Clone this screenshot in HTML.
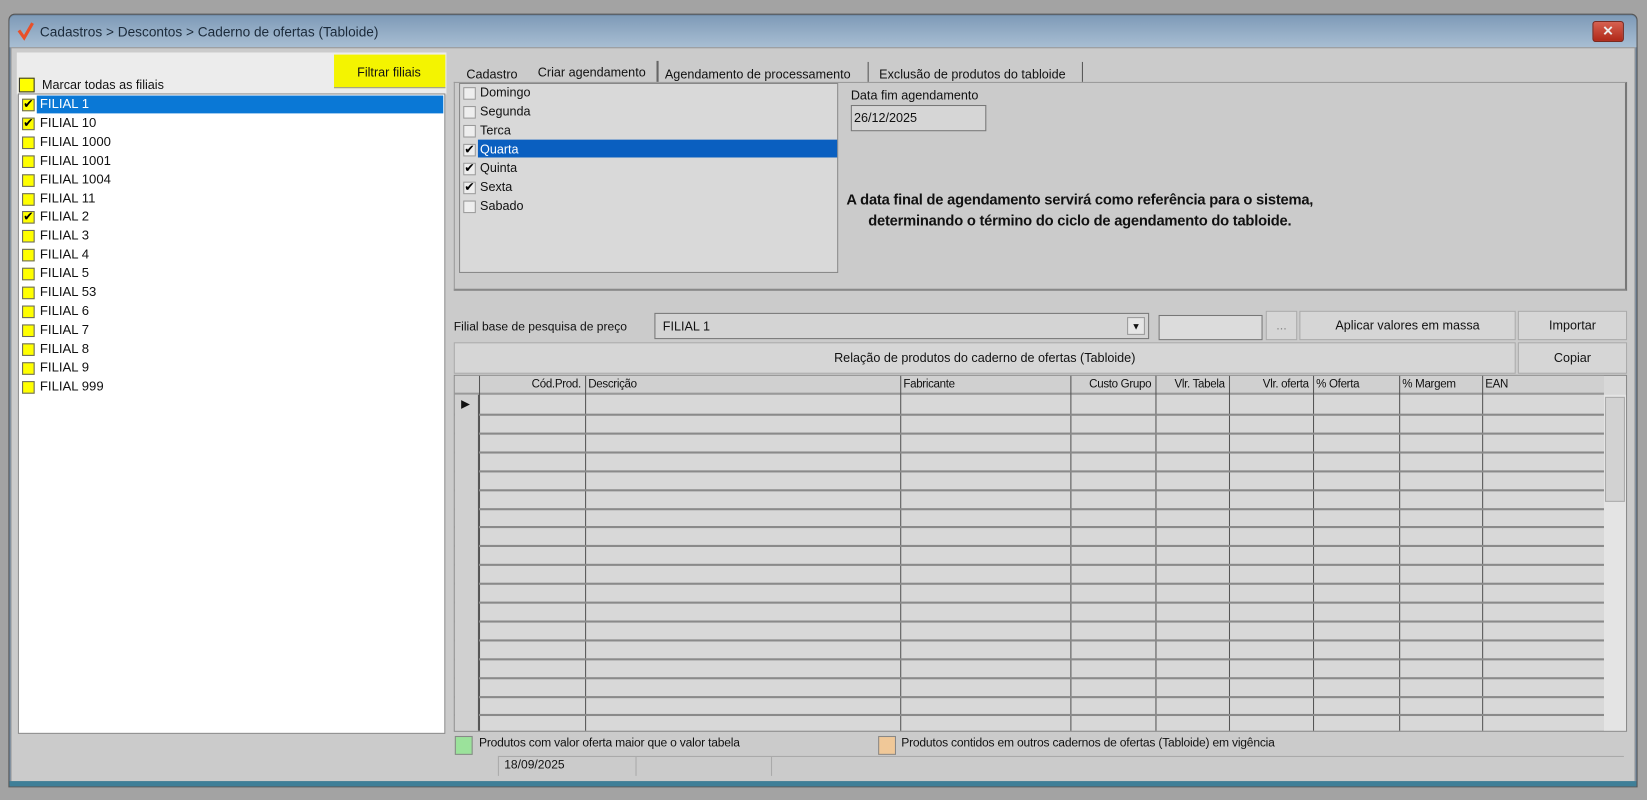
<!DOCTYPE html>
<html><head><meta charset="utf-8">
<style>
html,body{margin:0;padding:0;width:1647px;height:800px;overflow:hidden;background:#a3a3a3}
#s{position:absolute;left:0;top:0;width:1568px;height:762px;transform:scale(1.0504,1.0499);transform-origin:0 0;font-family:"Liberation Sans",sans-serif;font-size:12px;color:#111}
.a{position:absolute;box-sizing:border-box}
.t{position:absolute;white-space:nowrap}
.cb{position:absolute;width:12px;height:12px;box-sizing:border-box;border:1px solid #666;background:#ffff00}
.cw{position:absolute;width:12px;height:12px;box-sizing:border-box;border:1px solid #999;background:#eee}
.ck::after{content:"✔";position:absolute;left:0;top:-3px;font-size:12px;color:#000}
.btn{background:#d6d6d6;border:1px solid #aaa;text-align:center}
</style></head><body><div id="s">
<div class="a" style="left:8px;top:13px;width:1551px;height:737px;background:#6f8aa6;border-radius:6px 6px 0 0;border:1px solid #555"></div>
<div class="a" style="left:9px;top:15px;width:1549px;height:30px;background:linear-gradient(#7f9bb8,#a8bed3);border-radius:5px 5px 0 0"></div>
<svg class="a" style="left:16px;top:20px" width="20" height="20"><path d="M2 9 L7 16 L15 2" stroke="#e8502a" stroke-width="3" fill="none"/></svg>
<div class="t" style="left:38px;top:23px;font-size:13px;color:#1b2a3a">Cadastros &gt; Descontos &gt; Caderno de ofertas (Tabloide)</div>
<div class="a" style="left:1516px;top:20px;width:30px;height:20px;background:linear-gradient(#d66050,#b02818);border:1px solid #7a2a20;border-radius:3px;color:#eee;text-align:center;font-size:13px;line-height:18px;font-weight:bold">✕</div>
<div class="a" style="left:10px;top:45px;width:1547px;height:700px;background:#cbcbcb;border:1px solid #999"></div>
<div class="a" style="left:9px;top:744px;width:1549px;height:5px;background:#3f7f98"></div>
<div class="a" style="left:16px;top:50px;width:409px;height:40px;background:#ececec"></div>
<div class="a" style="left:318px;top:52px;width:106px;height:32px;background:#f4f400;border-bottom:1px solid #999"></div>
<div class="t" style="left:340px;top:62px">Filtrar filiais</div>
<div class="cb" style="left:18px;top:74px;width:15px;height:14px;border-color:#333"></div>
<div class="t" style="left:40px;top:74px">Marcar todas as filiais</div>
<div class="a" style="left:17px;top:89px;width:407px;height:610px;background:#fff;border:1px solid #888"></div>
<div class="a" style="left:35px;top:91px;width:387px;height:17px;background:#0a78d6"></div>
<div id="fl"></div>
<div class="t" style="left:444px;top:64px">Cadastro</div>
<div class="t" style="left:512px;top:62px">Criar agendamento</div>
<div class="a" style="left:625px;top:58px;width:2px;height:20px;background:#666"></div>
<div class="t" style="left:633px;top:64px">Agendamento de processamento</div>
<div class="a" style="left:826px;top:59px;width:1px;height:19px;background:#555"></div>
<div class="t" style="left:837px;top:64px">Exclusão de produtos do tabloide</div>
<div class="a" style="left:1030px;top:59px;width:1px;height:19px;background:#555"></div>
<div class="a" style="left:432px;top:78px;width:1117px;height:199px;border:1px solid #999;border-right:2px solid #777;border-bottom:2px solid #888"></div>
<div class="a" style="left:437px;top:79px;width:361px;height:181px;background:#d9d9d9;border:1px solid #888"></div>
<div class="a" style="left:455px;top:133px;width:342px;height:17px;background:#0a5fc0"></div>
<div id="dl"></div>
<div class="t" style="left:810px;top:84px">Data fim agendamento</div>
<div class="a" style="left:810px;top:100px;width:129px;height:25px;border:1px solid #777;background:#d6d6d6"></div>
<div class="t" style="left:813px;top:105px">26/12/2025</div>
<div class="t" style="left:778px;top:180px;width:500px;text-align:center;font-size:14px;font-weight:bold;line-height:20px;letter-spacing:-0.2px">A data final de agendamento servirá como referência para o sistema,<br>determinando o término do ciclo de agendamento do tabloide.</div>
<div class="t" style="left:432px;top:306px;font-size:11.5px">Filial base de pesquisa de preço</div>
<div class="a" style="left:623px;top:298px;width:471px;height:25px;border:1px solid #777;background:#d4d4d4"></div>
<div class="t" style="left:631px;top:304px">FILIAL 1</div>
<div class="a" style="left:1073px;top:302px;width:17px;height:17px;background:#e6e6e6;border:1px solid #999;font-size:9px;text-align:center;line-height:16px">▼</div>
<div class="a" style="left:1103px;top:300px;width:99px;height:24px;border:1px solid #777;background:#dcdcdc"></div>
<div class="a btn" style="left:1205px;top:296px;width:30px;height:28px;color:#888;line-height:26px">...</div>
<div class="a btn" style="left:1237px;top:296px;width:206px;height:28px;line-height:26px">Aplicar valores em massa</div>
<div class="a btn" style="left:1445px;top:296px;width:104px;height:28px;line-height:26px">Importar</div>
<div class="a btn" style="left:432px;top:326px;width:1011px;height:30px;line-height:28px">Relação de produtos do caderno de ofertas (Tabloide)</div>
<div class="a btn" style="left:1445px;top:326px;width:104px;height:30px;line-height:28px">Copiar</div>
<div class="a" style="left:432px;top:357px;width:1117px;height:340px;background:#d8d8d8;border:1px solid #888"></div>
<div class="a" style="left:433px;top:358px;width:1094px;height:18px;background:#d0d0d0;border-bottom:2px solid #999"></div>
<div class="a" style="left:1527px;top:376px;width:21px;height:320px;background:#e4e4e4"></div>
<div class="a" style="left:1528px;top:378px;width:19px;height:100px;background:#d2d2d2;border:1px solid #aaa"></div>
<div id="gr"></div>
<div class="t" style="left:439px;top:378px;font-size:11px;z-index:5">▶</div>
<div class="a" style="left:433px;top:701px;width:17px;height:18px;background:#9be29b;border:1px solid #888"></div>
<div class="t" style="left:456px;top:702px;font-size:11.5px;letter-spacing:-0.2px">Produtos com valor oferta maior que o valor tabela</div>
<div class="a" style="left:836px;top:701px;width:17px;height:18px;background:#f0c898;border:1px solid #888"></div>
<div class="t" style="left:858px;top:702px;font-size:11.5px;letter-spacing:-0.2px">Produtos contidos em outros cadernos de ofertas (Tabloide) em vigência</div>
<div class="a" style="left:474px;top:720px;width:1072px;height:1px;background:#aaa"></div>
<div class="a" style="left:474px;top:721px;width:1px;height:18px;background:#aaa"></div>
<div class="a" style="left:605px;top:721px;width:1px;height:18px;background:#aaa"></div>
<div class="a" style="left:734px;top:721px;width:1px;height:18px;background:#aaa"></div>
<div class="t" style="left:480px;top:723px;font-size:11.5px">18/09/2025</div>
</div>
<script>
var f=["FILIAL 1","FILIAL 10","FILIAL 1000","FILIAL 1001","FILIAL 1004","FILIAL 11","FILIAL 2","FILIAL 3","FILIAL 4","FILIAL 5","FILIAL 53","FILIAL 6","FILIAL 7","FILIAL 8","FILIAL 9","FILIAL 999"],ck=[0,1,6],h="";
f.forEach(function(n,i){var y=92+i*17.9;h+='<div class="cb'+(ck.indexOf(i)>=0?' ck':'')+'" style="left:21px;top:'+(y+2)+'px"></div><div class="t" style="left:38px;top:'+y+'px;font-size:12.5px;color:'+(i==0?'#fff':'#111')+'">'+n+'</div>'});
document.getElementById('fl').outerHTML=h;
var d=["Domingo","Segunda","Terca","Quarta","Quinta","Sexta","Sabado"];h="";
d.forEach(function(n,i){var y=80+i*18;h+='<div class="cw'+(i>=3&&i<=5?' ck':'')+'" style="left:441px;top:'+(y+3)+'px"></div><div class="t" style="left:457px;top:'+(y+1)+'px;color:'+(i==3?'#fff':'#111')+'">'+n+'</div>'});
document.getElementById('dl').outerHTML=h;
var c=[456,557,857,1019,1100,1170,1250,1332,1411],hd=["Cód.Prod.","Descrição","Fabricante","Custo Grupo","Vlr. Tabela","Vlr. oferta","% Oferta","% Margem","EAN"],al=[1,0,0,1,1,1,0,0,0];h="";
c.forEach(function(x,i){h+='<div class="a" style="left:'+x+'px;top:358px;width:1px;height:338px;background:#555"></div>';var nx=c[i+1]||1527;h+='<div class="t" style="font-size:11px;letter-spacing:-0.3px;top:360px;'+(al[i]?'left:'+x+'px;width:'+(nx-x-4)+'px;text-align:right':'left:'+(x+3)+'px')+'">'+hd[i]+'</div>'});
for(var y=394;y<696;y+=17.9){h+='<div class="a" style="left:433px;top:'+y+'px;width:1094px;height:2px;background:#8a8a8a"></div>'}
h+='<div class="a" style="left:433px;top:376px;width:23px;height:320px;background:#d0d0d0;border-right:1px solid #555"></div>';
document.getElementById('gr').outerHTML=h;
</script>
</body></html>
